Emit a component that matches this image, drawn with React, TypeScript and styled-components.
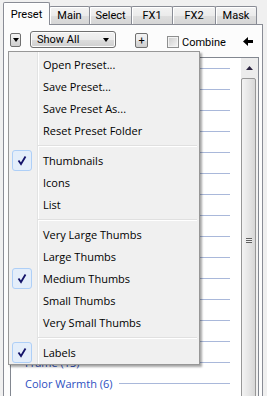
import styled, { createGlobalStyle } from 'styled-components';

const GlobalStyle = createGlobalStyle`
    html, body {
        margin: 0;
        padding: 0;
        background: #f0f0f0;
    }
    * {
        box-sizing: border-box;
    }
`;

const tabs = [
    { label: 'Preset', width: 47 },
    { label: 'Main', width: 41 },
    { label: 'Select', width: 43 },
    { label: 'FX1', width: 42 },
    { label: 'FX2', width: 44 },
    { label: 'Mask', width: 42 },
];

// rows under the open menu only show their rule on the right
const groups = [
    '', '', '', '', '', '', '', '', '', '', '', '', '', '',
    'Frame (13)',
    'Color Warmth (6)',
];

type MenuEntry = { label: string; checked?: boolean } | 'sep';

const menu: MenuEntry[] = [
    { label: 'Open Preset...' },
    { label: 'Save Preset...' },
    { label: 'Save Preset As...' },
    { label: 'Reset Preset Folder' },
    'sep',
    { label: 'Thumbnails', checked: true },
    { label: 'Icons' },
    { label: 'List' },
    'sep',
    { label: 'Very Large Thumbs' },
    { label: 'Large Thumbs' },
    { label: 'Medium Thumbs', checked: true },
    { label: 'Small Thumbs' },
    { label: 'Very Small Thumbs' },
    'sep',
    { label: 'Labels', checked: true },
];

const App = () => {
    return (
        <Window>
            <GlobalStyle />
            <TabStrip>
                {tabs.map((t, i) => (
                    <Tab key={t.label} $active={i === 0} $w={t.width}>
                        {t.label}
                    </Tab>
                ))}
            </TabStrip>
            <TabPage>
                <Toolbar>
                    <SmallDrop>
                        <Caret />
                    </SmallDrop>
                    <Combo>
                        <span>Show All</span>
                        <Caret />
                    </Combo>
                    <PlusButton>+</PlusButton>
                    <CheckLabel>
                        <CheckBox />
                        Combine
                    </CheckLabel>
                    <BackArrow viewBox='0 0 10 9' width={10} height={9}>
                        <polygon points='0,4.5 5,0 5,3 10,3 10,6 5,6 5,9' fill='#000' />
                    </BackArrow>
                </Toolbar>
                <ListBox>
                    <Rows>
                        {groups.map((g, i) => (
                            <GroupRow key={i}>
                                {g && <GroupName>{g}</GroupName>}
                                <GroupLine />
                            </GroupRow>
                        ))}
                    </Rows>
                    <ScrollBar>
                        <ScrollUp>
                            <svg width='7' height='4' viewBox='0 0 7 4'>
                                <polygon points='0,4 3.5,0 7,4' fill='#2b2340' />
                            </svg>
                        </ScrollUp>
                        <Thumb>
                            <Grip />
                        </Thumb>
                    </ScrollBar>
                </ListBox>
            </TabPage>

            <Menu>
                {menu.map((m, i) =>
                    m === 'sep' ? (
                        <Separator key={i} />
                    ) : (
                        <MenuItem key={m.label}>
                            <CheckCell $on={!!m.checked}>
                                {m.checked && (
                                    <svg width='10' height='11' viewBox='0 0 10 11'>
                                        <path
                                            d='M1.5 5.5 L4 9 L8.5 1.5'
                                            fill='none'
                                            stroke='#14146a'
                                            strokeWidth='1.8'
                                        />
                                    </svg>
                                )}
                            </CheckCell>
                            <ItemText>{m.label}</ItemText>
                        </MenuItem>
                    )
                )}
            </Menu>
        </Window>
    );
};

const Window = styled.div`
    position: relative;
    width: 267px;
    height: 396px;
    overflow: hidden;
    background: #f0f0f0;
    padding-top: 2px;
    font-family: Roboto, 'Liberation Sans', Arial, sans-serif;
    font-size: 11px;
    color: #000;
`;

const TabStrip = styled.div`
    display: flex;
    align-items: flex-end;
    height: 22px;
    padding-left: 3px;
`;

const Tab = styled.div<{ $active: boolean; $w: number }>`
    position: relative;
    width: ${(p) => p.$w}px;
    height: ${(p) => (p.$active ? 23 : 18)}px;
    margin-left: -1px;
    margin-bottom: ${(p) => (p.$active ? -1 : 0)}px;
    z-index: ${(p) => (p.$active ? 2 : 1)};
    border: 1px solid #898c95;
    border-bottom: none;
    border-radius: 2px 2px 0 0;
    background: ${(p) =>
        p.$active ? '#fcfcfc' : 'linear-gradient(#f3f3f3, #ebebeb 50%, #dedede 51%, #d6d6d6)'};
    box-shadow: inset 1px 1px 0 #fff;
    display: flex;
    justify-content: center;
    padding-top: ${(p) => (p.$active ? 5 : 2)}px;
    &:first-child {
        margin-left: 0;
    }
`;

const TabPage = styled.div`
    margin-left: 3px;
    width: 260px;
    height: 400px;
    border: 1px solid #898c95;
    background: #fcfcfc;
    display: flex;
    flex-direction: column;
`;

const Toolbar = styled.div`
    height: 32px;
    padding: 6px 0 0 6px;
    display: flex;
    align-items: flex-start;
`;

const Caret = styled.span`
    width: 0;
    height: 0;
    border-left: 3.5px solid transparent;
    border-right: 3.5px solid transparent;
    border-top: 4px solid #000;
`;

const SmallDrop = styled.div`
    margin-top: 2px;
    width: 11px;
    height: 14px;
    border: 1px solid #707070;
    border-radius: 2px;
    background: linear-gradient(#f2f2f2, #ebebeb 50%, #dddddd 51%, #cfcfcf);
    display: flex;
    align-items: center;
    justify-content: center;
`;

const Combo = styled.div`
    margin-left: 9px;
    width: 86px;
    height: 17px;
    border: 1px solid #707070;
    border-radius: 3px;
    background: linear-gradient(#f2f2f2, #ebebeb 50%, #dddddd 51%, #cfcfcf);
    box-shadow: inset 0 0 0 1px #fcfcfc;
    display: flex;
    align-items: center;
    justify-content: space-between;
    padding: 0 6px 0 6px;
`;

const PlusButton = styled.div`
    margin: 2px 0 0 19px;
    width: 13px;
    height: 15px;
    border: 1px solid #707070;
    border-radius: 2px;
    background: linear-gradient(#f2f2f2, #ebebeb 50%, #dddddd 51%, #cfcfcf);
    display: flex;
    align-items: center;
    justify-content: center;
    font-size: 11px;
    line-height: 1;
`;

const CheckLabel = styled.label`
    margin: 5px 0 0 19px;
    display: flex;
    align-items: center;
    gap: 3px;
    height: 12px;
`;

const CheckBox = styled.span`
    width: 12px;
    height: 12px;
    border: 1px solid #8e8f8f;
    background: linear-gradient(135deg, #cbcbcb, #f6f6f6);
    box-shadow: inset 0 0 0 1px #f4f4f4;
`;

const BackArrow = styled.svg`
    margin: 6px 0 0 auto;
    margin-right: 9px;
`;

const ListBox = styled.div`
    margin-left: 6px;
    width: 249px;
    flex: 1;
    border: 1px solid #828790;
    background: #fff;
    display: flex;
    overflow: hidden;
`;

const Rows = styled.div`
    flex: 1;
    display: flex;
    flex-direction: column;
`;

const GroupRow = styled.div`
    height: 21px;
    flex-shrink: 0;
    display: flex;
    align-items: center;
    padding: 0 11px 0 14px;
    gap: 6px;
`;

const GroupName = styled.span`
    font-family: 'Open Sans', 'Noto Sans', sans-serif;
    font-size: 11px;
    color: #2d4fbf;
    white-space: nowrap;
`;

const GroupLine = styled.span`
    flex: 1;
    height: 1px;
    background: #a9b8da;
`;

const ScrollBar = styled.div`
    width: 17px;
    flex-shrink: 0;
    background: linear-gradient(90deg, #e6e6e6, #f2f2f2);
    display: flex;
    flex-direction: column;
    align-items: center;
`;

const ScrollUp = styled.div`
    width: 17px;
    height: 20px;
    flex-shrink: 0;
    display: flex;
    align-items: center;
    justify-content: center;
    background: #ececec;
`;

const Thumb = styled.div`
    width: 15px;
    height: 324px;
    flex-shrink: 0;
    margin-right: 2px;
    border: 1px solid #979797;
    border-radius: 2px;
    background: linear-gradient(90deg, #f3f3f3, #e6e6e6 50%, #d7d7d7);
    display: flex;
    align-items: center;
    justify-content: center;
`;

const Grip = styled.span`
    width: 6px;
    height: 5px;
    background: repeating-linear-gradient(#606060 0 1px, #f0f0f0 1px 2px);
`;

const Menu = styled.div`
    position: absolute;
    left: 8px;
    top: 51px;
    width: 192px;
    padding: 1px 0;
    border: 1px solid #979797;
    background: linear-gradient(90deg, #f0f0f0 28px, #e2e3e3 28px 29px, #fff 29px 30px, #f0f0f0 30px);
    box-shadow: 2px 2px 2px rgba(0, 0, 0, 0.35);
    font-family: 'Open Sans', 'Noto Sans', sans-serif;
    font-size: 11px;
    z-index: 5;
`;

const MenuItem = styled.div`
    height: 22px;
    display: flex;
    align-items: center;
    padding-left: 3px;
`;

const CheckCell = styled.span<{ $on: boolean }>`
    width: 20px;
    height: 21px;
    border-radius: 3px;
    border: 1px solid ${(p) => (p.$on ? '#aecff7' : 'transparent')};
    background: ${(p) => (p.$on ? '#e4eefa' : 'transparent')};
    display: flex;
    align-items: center;
    justify-content: center;
`;

const ItemText = styled.span`
    margin-left: 11px;
    color: #000;
    white-space: nowrap;
`;

const Separator = styled.div`
    height: 8px;
    margin: 0 2px 0 29px;
    padding-top: 4px;
    &::before {
        content: '';
        display: block;
        height: 1px;
        background: #e0e0e0;
        border-bottom: 1px solid #fff;
        box-sizing: content-box;
    }
`;

export default App;
